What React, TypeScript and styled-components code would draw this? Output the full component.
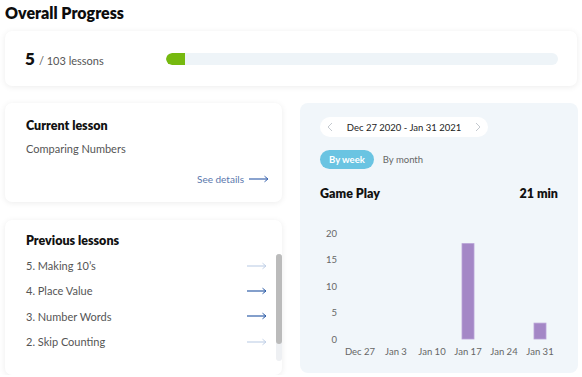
import styled, { createGlobalStyle } from 'styled-components'

const GlobalStyle = createGlobalStyle`
  body {
    margin: 0;
    background: #ffffff;
    font-family: Lato, "Open Sans", sans-serif;
    color: #111;
  }
`

const previousLessons = [
  { title: '5. Making 10’s', active: false },
  { title: '4. Place Value', active: true },
  { title: '3. Number Words', active: true },
  { title: '2. Skip Counting', active: false },
]

const weeks = [
  { label: 'Dec 27', value: 0 },
  { label: 'Jan 3', value: 0 },
  { label: 'Jan 10', value: 0 },
  { label: 'Jan 17', value: 18 },
  { label: 'Jan 24', value: 0 },
  { label: 'Jan 31', value: 3 },
]

const done = 5
const total = 103

const Arrow = ({ color }: { color: string }) => (
  <svg width="20" height="8" viewBox="0 0 20 8" fill="none">
    <path d="M0 4H19" stroke={color} strokeWidth="1.2" />
    <path d="M15.5 1.2L19 4L15.5 6.8" stroke={color} strokeWidth="1" />
  </svg>
)

const Chevron = ({ dir }: { dir: 'left' | 'right' }) => (
  <svg width="6" height="10" viewBox="0 0 6 10" fill="none">
    <path d={dir === 'left' ? 'M5 1L1 5L5 9' : 'M1 1L5 5L1 9'} stroke="#c4c9cf" strokeWidth="1" />
  </svg>
)

// chart area: zero line at y=124, 5.3px per minute, columns 36px apart
const GamePlayChart = () => {
  const zeroY = 124
  const unit = 5.3
  return (
    <ChartSvg width="258" height="145" viewBox="0 0 258 145">
      {[0, 5, 10, 15, 20].map((v) => (
        <text key={v} x="17" y={zeroY - v * unit + 3.5} fontSize="9.5" fill="#666" textAnchor="end" fontFamily="Lato, sans-serif">
          {v}
        </text>
      ))}
      {weeks.map((w, i) => {
        const cx = 40 + i * 36
        const h = w.value * unit
        return (
          <g key={w.label}>
            {w.value > 0 && (
              <rect x={cx - 6} y={zeroY - h} width="12" height={h} fill="#a487c6" stroke="#b9a2d6" strokeWidth="0.8" />
            )}
            <text x={cx} y={zeroY + 15.5} fontSize="9.5" fill="#666" textAnchor="middle" fontFamily="Lato, sans-serif">
              {w.label}
            </text>
          </g>
        )
      })}
    </ChartSvg>
  )
}

export default function App() {
  return (
    <Page>
      <GlobalStyle />
      <Title>Overall Progress</Title>
      <ProgressCard>
        <Count>
          <Big>{done}</Big>
          <Small>/ {total} lessons</Small>
        </Count>
        <Track>
          <Fill style={{ width: `${(done / total) * 100}%` }} />
        </Track>
      </ProgressCard>
      <Columns>
        <LeftColumn>
          <CurrentCard>
            <CardTitle>Current lesson</CardTitle>
            <LessonName>Comparing Numbers</LessonName>
            <DetailsLink>
              See details <Arrow color="#3d66b0" />
            </DetailsLink>
          </CurrentCard>
          <PreviousCard>
            <CardTitle>Previous lessons</CardTitle>
            <LessonList>
              {previousLessons.map((l) => (
                <LessonRow key={l.title}>
                  <span>{l.title}</span>
                  <Arrow color={l.active ? '#2f5ea8' : '#c3d2e8'} />
                </LessonRow>
              ))}
            </LessonList>
            <ScrollTrack>
              <ScrollThumb />
            </ScrollTrack>
          </PreviousCard>
        </LeftColumn>
        <StatsPanel>
          <DatePill>
            <Chevron dir="left" />
            <span>Dec 27 2020 - Jan 31 2021</span>
            <Chevron dir="right" />
          </DatePill>
          <Tabs>
            <Tab $active>By week</Tab>
            <Tab>By month</Tab>
          </Tabs>
          <StatHeader>
            <span>Game Play</span>
            <span>21 min</span>
          </StatHeader>
          <GamePlayChart />
        </StatsPanel>
      </Columns>
    </Page>
  )
}

const Page = styled.div`
  padding: 3px 4px 0 5px;
  width: 582px;
  box-sizing: border-box;
`

const Title = styled.h1`
  margin: 0;
  font-size: 16px;
  font-weight: 800;
  line-height: 20px;
  color: #0d0d0d;
`

const Card = styled.div`
  background: #fff;
  border-radius: 7px;
  box-shadow: 0 1px 6px rgba(0, 0, 0, 0.08);
  box-sizing: border-box;
`

const ProgressCard = styled(Card)`
  margin-top: 8px;
  width: 572px;
  height: 55px;
  display: flex;
  align-items: center;
  padding: 0 19px 0 20px;
`

const Count = styled.div`
  width: 141px;
  display: flex;
  align-items: baseline;
  gap: 4px;
`

const Big = styled.span`
  font-size: 17px;
  font-weight: 800;
  color: #111;
`

const Small = styled.span`
  font-size: 11px;
  color: #555;
`

const Track = styled.div`
  flex: 1;
  height: 12px;
  border-radius: 6px;
  background: #eef4f8;
  overflow: hidden;
`

const Fill = styled.div`
  height: 100%;
  background: #76b90f;
  border-radius: 6px 0 0 6px;
`

const Columns = styled.div`
  margin-top: 17px;
  display: grid;
  grid-template-columns: 277px 278px;
  gap: 18px;
  align-items: start;
`

const LeftColumn = styled.div`
  display: flex;
  flex-direction: column;
  gap: 18px;
`

const CurrentCard = styled(Card)`
  height: 99px;
  padding: 15px 12px 0 21px;
  display: flex;
  flex-direction: column;
`

const CardTitle = styled.div`
  font-size: 12.5px;
  font-weight: 800;
  color: #111;
`

const LessonName = styled.div`
  margin-top: 9px;
  font-size: 11px;
  color: #555;
`

const DetailsLink = styled.div`
  margin-top: 18px;
  margin-right: 1px;
  align-self: flex-end;
  display: flex;
  align-items: center;
  gap: 5px;
  font-size: 10px;
  color: #5b78ad;
`

const PreviousCard = styled(Card)`
  position: relative;
  height: 155px;
  padding: 13px 15px 0 21px;
`

const LessonList = styled.div`
  margin-top: 5px;
  display: flex;
  flex-direction: column;
`

const LessonRow = styled.div`
  height: 25.3px;
  display: flex;
  align-items: center;
  justify-content: space-between;
  font-size: 11px;
  color: #555;
`

const ScrollTrack = styled.div`
  position: absolute;
  right: 0;
  top: 34px;
  width: 6px;
  height: 107px;
  border-radius: 3px;
  background: #eef0f3;
`

const ScrollThumb = styled.div`
  height: 90px;
  border-radius: 3px;
  background: #bbbbbb;
`

const StatsPanel = styled.div`
  height: 270px;
  background: #f1f6fa;
  border-radius: 8px;
  padding: 14px 20px 0 20px;
  box-sizing: border-box;
  display: flex;
  flex-direction: column;
`

const DatePill = styled.div`
  width: 168px;
  height: 20px;
  border-radius: 10px;
  background: #fff;
  display: flex;
  align-items: center;
  justify-content: space-between;
  padding: 0 7px;
  box-sizing: border-box;
  font-size: 9.5px;
  color: #222;
`

const Tabs = styled.div`
  margin-top: 13px;
  display: flex;
`

const Tab = styled.div<{ $active?: boolean }>`
  height: 19px;
  padding: 0 9px;
  border-radius: 10px;
  display: flex;
  align-items: center;
  font-size: 9.5px;
  font-weight: ${({ $active }) => ($active ? 700 : 400)};
  background: ${({ $active }) => ($active ? '#6ac4e2' : 'transparent')};
  color: ${({ $active }) => ($active ? '#fff' : '#666')};
`

const StatHeader = styled.div`
  margin-top: 17px;
  height: 15px;
  display: flex;
  justify-content: space-between;
  font-size: 12.5px;
  font-weight: 800;
  color: #111;
`

const ChartSvg = styled.svg`
  display: block;
  margin-top: 14px;
`
